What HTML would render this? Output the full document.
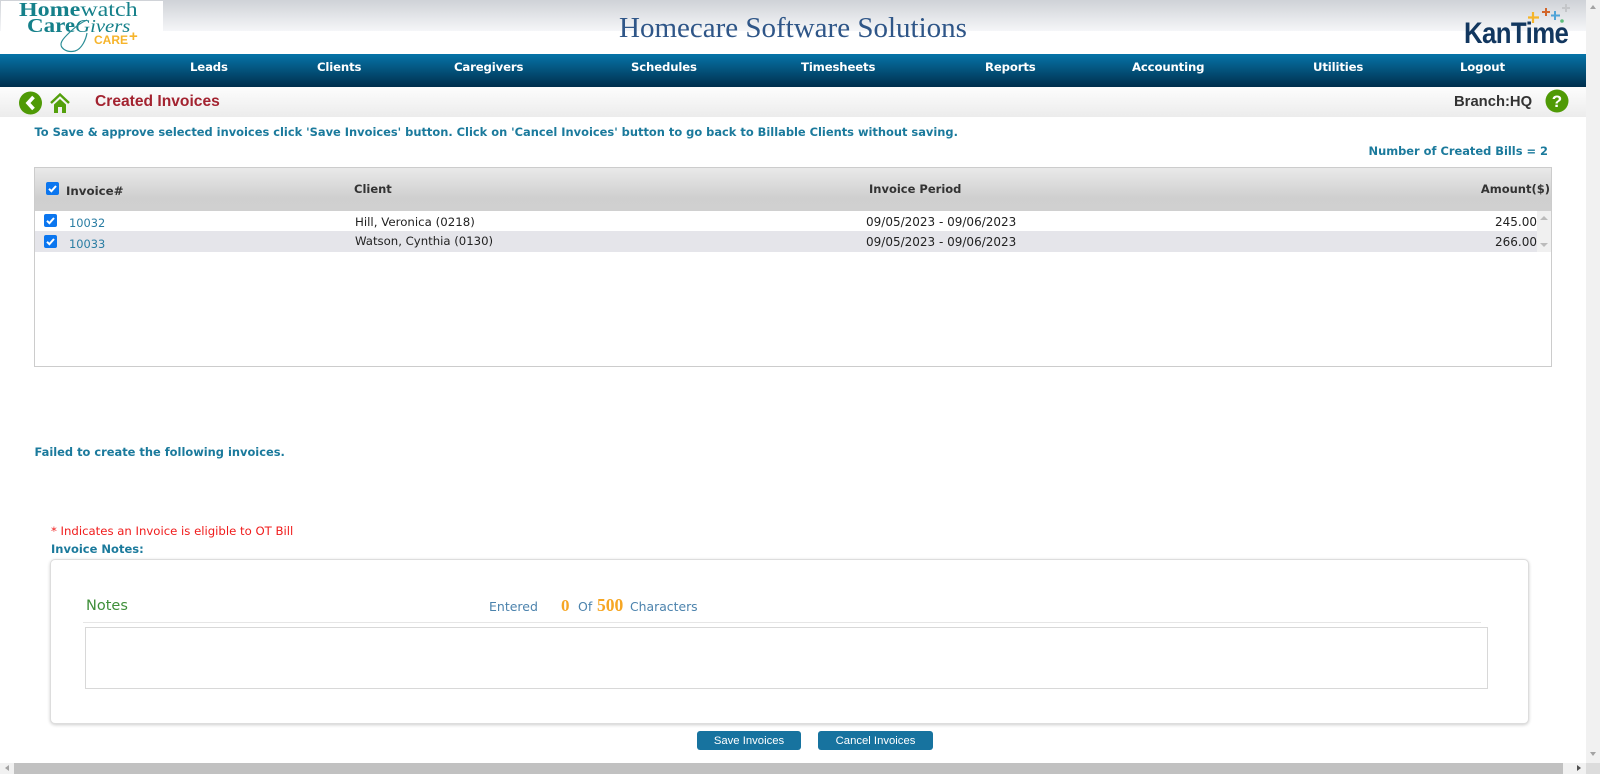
<!DOCTYPE html>
<html lang="en">
<head>
<meta charset="utf-8">
<title>Created Invoices</title>
<style>
html,body{margin:0;padding:0;width:1600px;height:776px;overflow:hidden;background:#fff}
body{position:relative;font-family:"DejaVu Sans","Liberation Sans",sans-serif;font-size:12px;color:#222}
.a{position:absolute;white-space:nowrap;line-height:1}
.nav{top:62px;color:#fff;font-weight:700;font-size:11.7px;font-family:"DejaVu Sans",sans-serif;letter-spacing:-.15px}
.t{color:#1b7a9c;font-weight:700;font-size:11.43px}
.h{color:#333;font-weight:700;font-size:11.5px}
.c{color:#222;font-size:11.8px}
.d{color:#222;font-size:12px}
.l{color:#2a7da3;font-size:11.4px}
.cb{position:absolute;width:13px;height:13px;border-radius:2px;background:#0b76ef}
.cb svg{position:absolute;left:0;top:0}
.btn{position:absolute;top:731px;height:19px;background:#17739f;border-radius:3px;color:#fff;font:11.3px/20px "Liberation Sans",sans-serif;text-align:center}
</style>
</head>
<body>
<div class="a" style="left:0;top:0;width:1586px;height:31px;background:linear-gradient(#cfd2d7,#f5f6f8)"></div>
<div class="a" style="left:1px;top:1px;width:162px;height:31px;background:#fff"></div>
<div class="a" style="left:619px;top:14px;font:29px/1 'Liberation Serif',serif;color:#2f5688">Homecare Software Solutions</div>

<div class="a" style="left:19px;top:0;font:700 20px/1 'Liberation Serif',serif;color:#15808a;transform:scaleX(1.2);transform-origin:left top">Home<span style="font-weight:400">watch</span></div>
<div class="a" style="left:27px;top:16px;font:700 20px/1 'Liberation Serif',serif;color:#15808a;transform:scaleX(1.15);transform-origin:left top">Care<span style="font-weight:400;font-style:italic;font-size:18px">Givers</span></div>
<div class="a" style="left:94px;top:34px;font:700 12px/1 'Liberation Sans',sans-serif;color:#f6b42b">CARE</div>
<div class="a" style="left:129px;top:29px;font:700 15px/1 'Liberation Sans',sans-serif;color:#f6b42b">+</div>
<svg class="a" style="left:55px;top:15px" width="40" height="40" viewBox="0 0 40 40"><path d="M32 5C20 10 8 24 7 26C3 33 12 38 20 36C27 34 31 24 32 18" fill="none" stroke="#2a8d96" stroke-width="1.2"/></svg>

<div class="a" style="left:1464px;top:19px;font:700 30px/1 'Liberation Sans',sans-serif;color:#12375f;letter-spacing:-.7px;transform:scaleX(.86);transform-origin:left top">KanTime</div>
<svg class="a" style="left:1520px;top:0" width="62" height="26" viewBox="0 0 62 26">
<path d="M13 12v11M8 17.500h11" stroke="#f5b52a" stroke-width="2.200"/>
<path d="M26 8v8M22 12h8" stroke="#d2662b" stroke-width="2"/>
<path d="M35 11v9M31 15.500h9" stroke="#4fa4d8" stroke-width="2"/>
<path d="M46 4v8M42 8h8" stroke="#c4c6c9" stroke-width="2"/>
<circle cx="42" cy="21" r="1.800" fill="#5dbd7c"/>
</svg>

<div class="a" style="left:0;top:54px;width:1586px;height:33px;background:linear-gradient(#0674a8,#002f4d)"></div>
<div class="a nav" style="left:190px">Leads</div>
<div class="a nav" style="left:317px">Clients</div>
<div class="a nav" style="left:454px">Caregivers</div>
<div class="a nav" style="left:631px">Schedules</div>
<div class="a nav" style="left:801px">Timesheets</div>
<div class="a nav" style="left:985px">Reports</div>
<div class="a nav" style="left:1132px">Accounting</div>
<div class="a nav" style="left:1313px">Utilities</div>
<div class="a nav" style="left:1460px">Logout</div>

<div class="a" style="left:0;top:87px;width:1586px;height:30px;background:linear-gradient(#fdfdfd,#ececec)"></div>
<svg class="a" style="left:19px;top:91px" width="24" height="24" viewBox="0 0 24 24"><circle cx="11.500" cy="12" r="11.500" fill="#4f9a06"/><path d="M14.500 6L9 12l5.500 6" fill="none" stroke="#fff" stroke-width="3.600"/></svg>
<svg class="a" style="left:49px;top:92px" width="22" height="22" viewBox="0 0 22 22"><path d="M2 11L11 2.500 20 11" fill="none" stroke="#54a00c" stroke-width="2.400"/><path d="M5 12.500l6-5.500 6 5.500V21h-4v-6H9v6H5z" fill="#54a00c"/></svg>
<div class="a" style="left:95px;top:94px;font:700 15.600px/1 'Liberation Sans',sans-serif;color:#a32330">Created Invoices</div>
<div class="a" style="left:1454px;top:95.300px;font:700 14.800px/1 'Liberation Sans',sans-serif;color:#333">Branch:HQ</div>
<svg class="a" style="left:1545px;top:89px" width="24" height="24" viewBox="0 0 24 24"><circle cx="12" cy="12" r="11.500" fill="#4f9a06"/><text x="12" y="18" text-anchor="middle" font-family="Liberation Sans,sans-serif" font-weight="700" font-size="17" fill="#fff">?</text></svg>

<div class="a t" style="left:34.500px;top:127px">To Save &amp; approve selected invoices click 'Save Invoices' button. Click on 'Cancel Invoices' button to go back to Billable Clients without saving.</div>
<div class="a t" style="right:52px;top:146px">Number of Created Bills = 2</div>

<div class="a" style="left:34px;top:167px;width:1516px;height:198px;border:1px solid #ccc;box-sizing:content-box"></div>
<div class="a" style="left:35px;top:168px;width:1516px;height:43px;background:linear-gradient(#e9e9e9,#cfcfcf 70%,#d0d0d0)"></div>
<div class="cb" style="left:46px;top:182px"><svg width="13" height="13" viewBox="0 0 13 13"><path d="M3 6.800l2.400 2.400L10 4" fill="none" stroke="#fff" stroke-width="2"/></svg></div>
<div class="a h" style="left:66px;top:186px;font-size:11.8px">Invoice#</div>
<div class="a h" style="left:354px;top:184px">Client</div>
<div class="a h" style="left:869px;top:184px">Invoice Period</div>
<div class="a h" style="right:50px;top:184px">Amount($)</div>

<div class="a" style="left:35px;top:231px;width:1502px;height:21px;background:#e5e5ea"></div>
<div class="a" style="left:1537px;top:211px;width:14px;height:41px;background:#f0f0f0"></div>
<div class="a" style="left:1540px;top:216px;width:0;height:0;border:4px solid transparent;border-top:0;border-bottom:4px solid #bbb"></div>
<div class="a" style="left:1540px;top:243px;width:0;height:0;border:4px solid transparent;border-bottom:0;border-top:4px solid #bbb"></div>

<div class="cb" style="left:44px;top:214px"><svg width="13" height="13" viewBox="0 0 13 13"><path d="M3 6.800l2.400 2.400L10 4" fill="none" stroke="#fff" stroke-width="2"/></svg></div>
<div class="a l" style="left:69px;top:218px">10032</div>
<div class="a c" style="left:355px;top:217px">Hill, Veronica (0218)</div>
<div class="a d" style="left:866px;top:216px">09/05/2023 - 09/06/2023</div>
<div class="a d" style="right:63px;top:216px">245.00</div>

<div class="cb" style="left:44px;top:235px"><svg width="13" height="13" viewBox="0 0 13 13"><path d="M3 6.800l2.400 2.400L10 4" fill="none" stroke="#fff" stroke-width="2"/></svg></div>
<div class="a l" style="left:69px;top:239px">10033</div>
<div class="a c" style="left:355px;top:236px;font-size:11.700px">Watson, Cynthia (0130)</div>
<div class="a d" style="left:866px;top:236px">09/05/2023 - 09/06/2023</div>
<div class="a d" style="right:63px;top:236px">266.00</div>

<div class="a t" style="left:34.500px;top:447px">Failed to create the following invoices.</div>
<div class="a" style="left:51px;top:526px;font-size:11.700px;color:#f01c1c">* Indicates an Invoice is eligible to OT Bill</div>
<div class="a t" style="left:51px;top:544px;font-size:11.500px">Invoice Notes:</div>

<div class="a" style="left:50px;top:559px;width:1477px;height:163px;border:1px solid #ddd;border-radius:5px;box-shadow:0 1px 3px rgba(0,0,0,.2);background:#fff"></div>
<div class="a" style="left:86px;top:598.500px;font-size:14.500px;color:#3f8f3a">Notes</div>
<div class="a" style="left:489px;top:601px;font-size:12.500px;color:#4c83ad">Entered</div>
<div class="a" style="left:561px;top:597px;font:700 17px/1 'Liberation Serif',serif;color:#f6a623">0</div>
<div class="a" style="left:578px;top:601px;font-size:12.500px;color:#4c83ad">Of</div>
<div class="a" style="left:597px;top:597px;font:700 17.500px/1 'Liberation Serif',serif;color:#f6a623">500</div>
<div class="a" style="left:630px;top:601px;font-size:12.400px;color:#4c83ad">Characters</div>
<div class="a" style="left:83px;top:622px;width:1398px;height:1px;background:#e6e6e6"></div>
<div class="a" style="left:85px;top:627px;width:1401px;height:60px;border:1px solid #d8d8d8;background:#fff"></div>

<div class="btn" style="left:697px;width:104px">Save Invoices</div>
<div class="btn" style="left:818px;width:115px">Cancel Invoices</div>

<div class="a" style="left:1586px;top:0;width:14px;height:763px;background:#f1f1f1"></div>
<div class="a" style="left:1590px;top:5px;width:0;height:0;border:3.500px solid transparent;border-top:0;border-bottom:4px solid #a3a3a3"></div>
<div class="a" style="left:1590px;top:752px;width:0;height:0;border:3.500px solid transparent;border-bottom:0;border-top:4px solid #a3a3a3"></div>
<div class="a" style="left:0;top:763px;width:1586px;height:11px;background:#f1f1f1"></div>
<div class="a" style="left:14px;top:763px;width:1549px;height:11px;background:#c1c1c1"></div>
<div class="a" style="left:1586px;top:763px;width:14px;height:11px;background:#dcdcdc"></div>
<div class="a" style="left:5px;top:765px;width:0;height:0;border:3.500px solid transparent;border-left:0;border-right:4px solid #a3a3a3"></div>
<div class="a" style="left:1577px;top:765px;width:0;height:0;border:3.500px solid transparent;border-right:0;border-left:4px solid #505050"></div>
</body>
</html>
